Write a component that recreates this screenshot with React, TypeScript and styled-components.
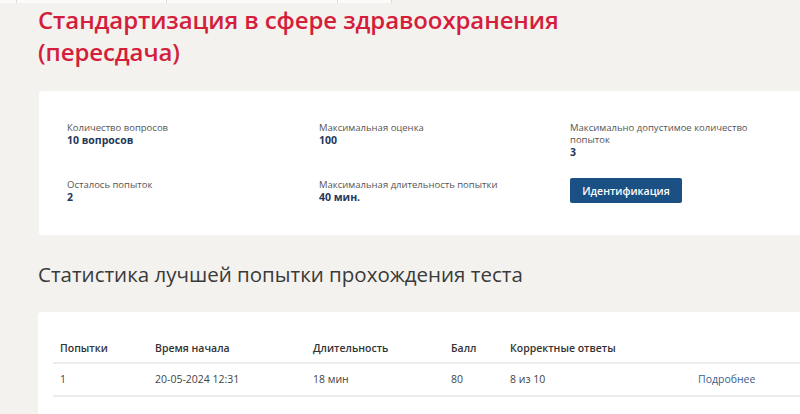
import React from 'react'
import styled, { createGlobalStyle } from 'styled-components'

const GlobalStyle = createGlobalStyle`
  html, body {
    margin: 0;
    padding: 0;
    background: #f3f2ef;
    font-family: "Open Sans", "Noto Sans", sans-serif;
    overflow: hidden;
  }
`

const stats = [
	{ label: 'Количество вопросов', value: '10 вопросов' },
	{ label: 'Максимальная оценка', value: '100' },
	{ label: 'Максимально допустимое количество попыток', value: '3' },
	{ label: 'Осталось попыток', value: '2' },
	{ label: 'Максимальная длительность попытки', value: '40 мин.' },
]

const columns = ['Попытки', 'Время начала', 'Длительность', 'Балл', 'Корректные ответы', '']

const attempts = [
	{ n: '1', start: '20-05-2024 12:31', duration: '18 мин', score: '80', correct: '8 из 10' },
]

const App = () => {
	return (
		<Page>
			<GlobalStyle/>
			<TopStrip>
				<Tab $w={ 16 }/>
				<Tab $w={ 149 }/>
				<Tab $w={ 170 }/>
				<Tab $w={ 53 }/>
			</TopStrip>
			<Content>
				<Title>Стандартизация в сфере здравоохранения<br/>(пересдача)</Title>

				<InfoCard>
					<InfoGrid>
						{ stats.map((s) => (
							<Stat key={ s.label }>
								<StatLabel>{ s.label }</StatLabel>
								<StatValue>{ s.value }</StatValue>
							</Stat>
						)) }
						<Stat>
							<Button>Идентификация</Button>
						</Stat>
					</InfoGrid>
				</InfoCard>

				<Heading>Статистика лучшей попытки прохождения теста</Heading>

				<TableCard>
					<Table>
						<thead>
							<tr>
								{ columns.map((c, i) => <Th key={ i }>{ c }</Th>) }
							</tr>
						</thead>
						<tbody>
							{ attempts.map((a) => (
								<tr key={ a.n }>
									<Td>{ a.n }</Td>
									<Td>{ a.start }</Td>
									<Td>{ a.duration }</Td>
									<Td>{ a.score }</Td>
									<Td>{ a.correct }</Td>
									<Td><More href='#'>Подробнее</More></Td>
								</tr>
							)) }
						</tbody>
					</Table>
				</TableCard>
			</Content>
		</Page>
	)
}

export default App

const Page = styled.div`
  width: 800px;
  height: 414px;
  overflow: hidden;
  background: #f3f2ef;
`

const TopStrip = styled.div`
  display: flex;
  height: 3px;
`

const Tab = styled.div<{ $w: number }>`
  width: ${ (p) => p.$w }px;
  background: #fbfbfa;
  border-right: 1px solid #dcdcdc;
`

const Content = styled.div`
  padding-left: 38px;
`

const Title = styled.h1`
  margin: 1px 0 0 0;
  font-family: "Open Sans", sans-serif;
  font-size: 24px;
  font-weight: 600;
  line-height: 32px;
  color: #d41e3c;
  letter-spacing: -0.1px;
`

const InfoCard = styled.section`
  margin-top: 23px;
  margin-left: 1px;
  width: 800px;
  height: 144px;
  background: #ffffff;
  border-radius: 3px;
  box-sizing: border-box;
  padding: 31px 0 0 28px;
`

const InfoGrid = styled.div`
  display: grid;
  grid-template-columns: 252px 251px 200px;
  grid-template-rows: 57px auto;
`

const Stat = styled.div`
  display: flex;
  flex-direction: column;
`

const StatLabel = styled.span`
  font-size: 9.5px;
  line-height: 12px;
  color: #555;
`

const StatValue = styled.span`
  font-size: 10.5px;
  line-height: 12px;
  font-weight: 700;
  color: #253858;
`

const Button = styled.button`
  align-self: flex-start;
  margin-top: -1px;
  width: 112px;
  height: 25px;
  border: none;
  border-radius: 2px;
  background: #1a5084;
  color: #fff;
  font-family: "Open Sans", sans-serif;
  font-size: 10.5px;
  font-weight: 600;
  cursor: pointer;
`

const Heading = styled.h2`
  margin: 25px 0 0 0;
  font-family: "Open Sans", sans-serif;
  font-size: 20.5px;
  font-weight: 400;
  line-height: 28px;
  color: #3a3a3a;
`

const TableCard = styled.section`
  margin-top: 24px;
  width: 800px;
  height: 120px;
  background: #fff;
  border-radius: 3px;
  box-sizing: border-box;
  padding: 26px 0 0 15px;
`

const Table = styled.table`
  border-collapse: collapse;
  width: 750px;
  table-layout: fixed;

  th:nth-child(1) { width: 95px; }
  th:nth-child(2) { width: 158px; }
  th:nth-child(3) { width: 138px; }
  th:nth-child(4) { width: 59px; }
  th:nth-child(5) { width: 188px; }
`

const Th = styled.th`
  box-sizing: border-box;
  text-align: left;
  padding: 3px 0 7px 7px;
  font-size: 10.5px;
  font-weight: 600;
  color: #333;
  border-bottom: 2px solid #ececec;
`

const Td = styled.td`
  padding: 8px 0 9px 7px;
  font-size: 10.5px;
  color: #444;
  border-bottom: 2px solid #ececec;
`

const More = styled.a`
  color: #3b5f8c;
  text-decoration: none;
`
